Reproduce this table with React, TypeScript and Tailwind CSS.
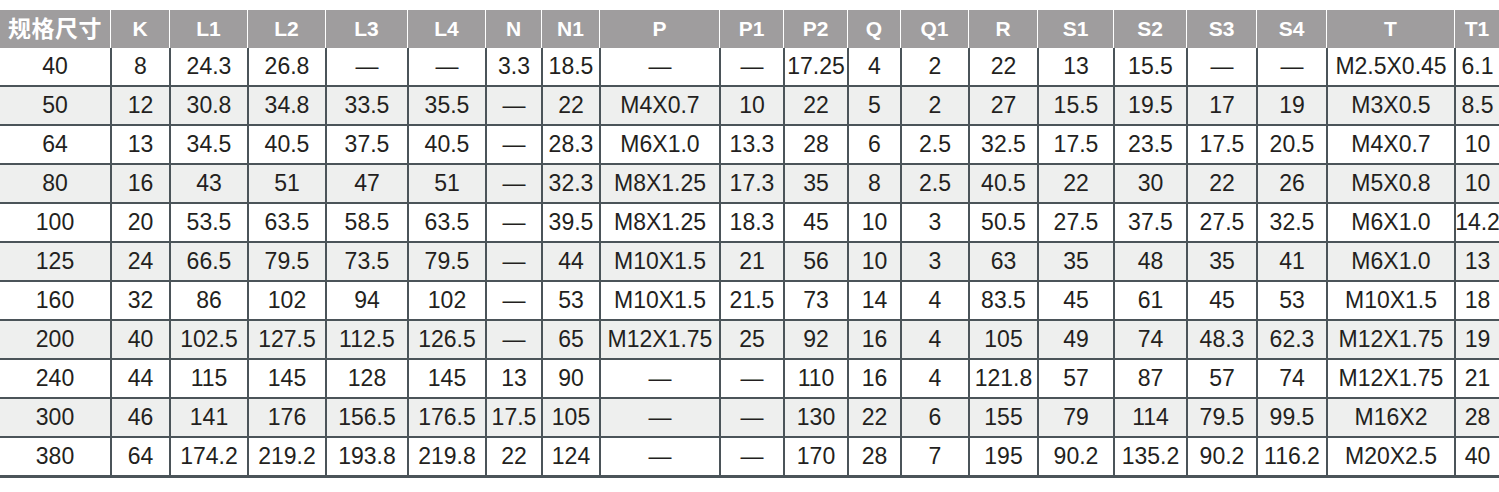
const headers = ["规格尺寸", "K", "L1", "L2", "L3", "L4", "N", "N1", "P", "P1", "P2", "Q", "Q1", "R", "S1", "S2", "S3", "S4", "T", "T1"];

// column widths in px, taken from the reference grid lines
const widths = [
  "w-[110px]", "w-[59px]", "w-[78px]", "w-[78px]", "w-[82px]", "w-[78px]", "w-[56px]", "w-[58px]", "w-[120px]", "w-[64px]",
  "w-[64px]", "w-[53px]", "w-[68px]", "w-[69px]", "w-[76px]", "w-[73px]", "w-[70px]", "w-[70px]", "w-[128px]", "w-[45px]",
];

const D = "—";

const rows: string[][] = [
  ["40", "8", "24.3", "26.8", D, D, "3.3", "18.5", D, D, "17.25", "4", "2", "22", "13", "15.5", D, D, "M2.5X0.45", "6.1"],
  ["50", "12", "30.8", "34.8", "33.5", "35.5", D, "22", "M4X0.7", "10", "22", "5", "2", "27", "15.5", "19.5", "17", "19", "M3X0.5", "8.5"],
  ["64", "13", "34.5", "40.5", "37.5", "40.5", D, "28.3", "M6X1.0", "13.3", "28", "6", "2.5", "32.5", "17.5", "23.5", "17.5", "20.5", "M4X0.7", "10"],
  ["80", "16", "43", "51", "47", "51", D, "32.3", "M8X1.25", "17.3", "35", "8", "2.5", "40.5", "22", "30", "22", "26", "M5X0.8", "10"],
  ["100", "20", "53.5", "63.5", "58.5", "63.5", D, "39.5", "M8X1.25", "18.3", "45", "10", "3", "50.5", "27.5", "37.5", "27.5", "32.5", "M6X1.0", "14.2"],
  ["125", "24", "66.5", "79.5", "73.5", "79.5", D, "44", "M10X1.5", "21", "56", "10", "3", "63", "35", "48", "35", "41", "M6X1.0", "13"],
  ["160", "32", "86", "102", "94", "102", D, "53", "M10X1.5", "21.5", "73", "14", "4", "83.5", "45", "61", "45", "53", "M10X1.5", "18"],
  ["200", "40", "102.5", "127.5", "112.5", "126.5", D, "65", "M12X1.75", "25", "92", "16", "4", "105", "49", "74", "48.3", "62.3", "M12X1.75", "19"],
  ["240", "44", "115", "145", "128", "145", "13", "90", D, D, "110", "16", "4", "121.8", "57", "87", "57", "74", "M12X1.75", "21"],
  ["300", "46", "141", "176", "156.5", "176.5", "17.5", "105", D, D, "130", "22", "6", "155", "79", "114", "79.5", "99.5", "M16X2", "28"],
  ["380", "64", "174.2", "219.2", "193.8", "219.8", "22", "124", D, D, "170", "28", "7", "195", "90.2", "135.2", "90.2", "116.2", "M20X2.5", "40"],
];

const App = () => {
  return (
    <div className="w-[1499px] h-[492px] bg-white pt-[10px] font-['Liberation_Sans','Noto_Sans_CJK_SC',sans-serif]">
      {/* header */}
      <div className="flex h-[38px] bg-[#9f9d9e] text-white font-bold">
        {headers.map((h, i) => (
          <div
            key={h}
            className={`${widths[i]} shrink-0 flex items-center justify-center whitespace-nowrap ${i > 0 ? "border-l-[1.5px] border-white" : ""} ${i === 0 ? "text-[23px] tracking-[0.5px]" : "text-[21px]"}`}
          >
            {h}
          </div>
        ))}
      </div>

      {/* body */}
      {rows.map((row, r) => (
        <div
          key={row[0]}
          className={`flex border-[#4b5459] ${r === rows.length - 1 ? "h-[40px] border-b-[3px]" : "h-[39px] border-b-2"} ${r % 2 === 1 ? "bg-[#eeefee]" : "bg-white"}`}
        >
          {row.map((cell, i) => (
            <div
              key={i}
              className={`${widths[i]} shrink-0 flex items-center justify-center whitespace-nowrap text-[23px] text-[#231f20] ${i > 0 ? "border-l-2 border-[#4b5459]" : ""}`}
            >
              {cell}
            </div>
          ))}
        </div>
      ))}
    </div>
  );
};

export default App;
